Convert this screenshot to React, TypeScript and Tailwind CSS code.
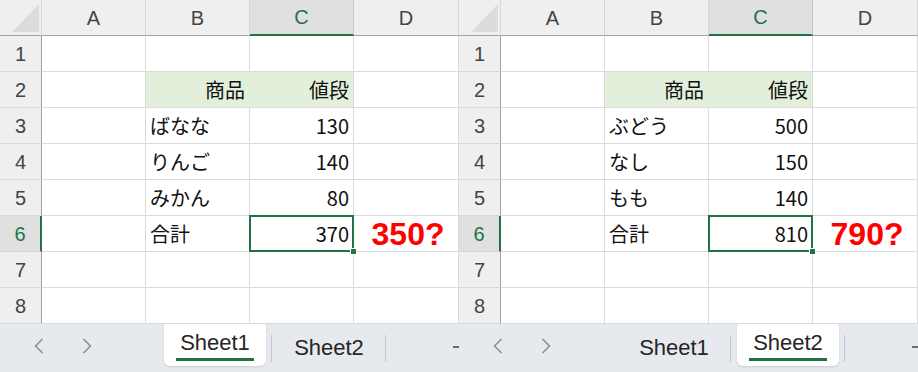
import React from "react";

type SheetProps = {
	items: [string, string][];
	total: string;
	note: string;
	active: number;
};

const font = { fontFamily: '"Noto Sans CJK JP", "Noto Sans", sans-serif' };
const headFont = { fontFamily: '"Liberation Sans", Arial, sans-serif' };

const COLS = ["A", "B", "C", "D"];

function ColHeader({ label }: { label: string }) {
	const sel = label === "C";
	return (
		<div
			style={headFont}
			className={
				sel
					? "flex h-[36px] items-center justify-center border-r border-b-2 border-r-[#c9c9c9] border-b-[#217346] bg-[#e0e0e0] text-[20px] text-[#217346]"
					: "flex h-[36px] items-center justify-center border-r border-b border-r-[#d6d6d6] border-b-[#a3a3a3] bg-[#efefef] text-[20px] text-[#444]"
			}
		>
			{label}
		</div>
	);
}

function RowHeader({ n }: { n: number }) {
	const sel = n === 6;
	return (
		<div
			style={headFont}
			className={
				sel
					? "flex h-[36px] items-center justify-center border-b border-r-2 border-b-[#d4d4d4] border-r-[#217346] bg-[#e0e0e0] text-[20px] text-[#217346]"
					: "flex h-[36px] items-center justify-center border-b border-r border-b-[#d9d9d9] border-r-[#a3a3a3] bg-[#efefef] text-[20px] text-[#444]"
			}
		>
			{n}
		</div>
	);
}

function Cell({
	children,
	right,
	fill,
	noRight,
	selected,
}: {
	children?: React.ReactNode;
	right?: boolean;
	fill?: boolean;
	noRight?: boolean;
	selected?: boolean;
}) {
	return (
		<div
			style={font}
			className={[
				"relative flex h-[36px] items-center border-b border-r border-b-[#dadada] px-[4px] text-[20px] text-[#111]",
				right ? "justify-end" : "justify-start",
				fill ? "bg-[#e2efda]" : "bg-white",
				noRight ? "border-r-[#e2efda]" : "border-r-[#dadada]",
			].join(" ")}
		>
			{selected && (
				<div className="absolute -inset-px z-10 border-2 border-[#217346]">
					<div className="absolute -right-[5px] -bottom-[5px] h-[7px] w-[7px] border border-white bg-[#217346]" />
				</div>
			)}
			<span className="relative z-20">{children}</span>
		</div>
	);
}

function Chevron({ dir }: { dir: "l" | "r" }) {
	return (
		<svg width="10" height="16" viewBox="0 0 10 16" className="mt-[14px]">
			<path
				d={dir === "l" ? "M8.5 1 L1.5 8 L8.5 15" : "M1.5 1 L8.5 8 L1.5 15"}
				fill="none"
				stroke="#8c8c8c"
				strokeWidth="1.5"
			/>
		</svg>
	);
}

function Tab({ label, active }: { label: string; active: boolean }) {
	return (
		<div
			style={headFont}
			className={
				active
					? "flex h-[42px] w-[102px] flex-col items-center rounded-b-[6px] rounded-t-[3px] bg-white pt-[8px] text-[22px] leading-none text-[#262626] shadow-[0_1px_2px_rgba(0,0,0,0.12)]"
					: "flex h-[42px] w-[102px] flex-col items-center pt-[13px] text-[22px] leading-none text-[#262626]"
			}
		>
			<span>{label}</span>
			{active && <div className="mt-[4px] h-[3px] w-[78px] bg-[#217346]" />}
		</div>
	);
}

function Sheet({ items, total, note, active }: SheetProps) {
	const rows: React.ReactNode[] = [];
	for (let r = 1; r <= 8; r++) {
		rows.push(<RowHeader key={`h${r}`} n={r} />);
		if (r === 2) {
			rows.push(<Cell key="a2" />);
			rows.push(
				<Cell key="b2" right fill noRight>
					商品
				</Cell>,
			);
			rows.push(
				<Cell key="c2" right fill>
					値段
				</Cell>,
			);
			rows.push(<Cell key="d2" />);
		} else if (r >= 3 && r <= 5) {
			const [name, price] = items[r - 3];
			rows.push(<Cell key={`a${r}`} />);
			rows.push(<Cell key={`b${r}`}>{name}</Cell>);
			rows.push(
				<Cell key={`c${r}`} right>
					{price}
				</Cell>,
			);
			rows.push(<Cell key={`d${r}`} />);
		} else if (r === 6) {
			rows.push(<Cell key="a6" />);
			rows.push(<Cell key="b6">合計</Cell>);
			rows.push(
				<Cell key="c6" right selected>
					{total}
				</Cell>,
			);
			rows.push(
				<div
					key="d6"
					style={headFont}
					className="flex h-[36px] items-center justify-center border-b border-r border-[#dadada] bg-white pl-[4px] text-[32px] leading-none font-bold text-[#ff0000]"
				>
					{note}
				</div>,
			);
		} else {
			COLS.forEach((c) => rows.push(<Cell key={`${c}${r}`} />));
		}
	}

	return (
		<div className="flex h-[372px] w-[459px] shrink-0 flex-col overflow-hidden">
			<div className="grid grid-cols-[42px_104px_104px_104px_105px]">
				<div className="relative h-[36px] border-r border-b border-r-[#d6d6d6] border-b-[#a3a3a3] bg-[#efefef]">
					<svg width="42" height="36" className="absolute inset-0">
						<polygon points="12,32 39,32 39,4" fill="#dcdcdc" />
					</svg>
				</div>
				{COLS.map((c) => (
					<ColHeader key={c} label={c} />
				))}
				{rows}
			</div>
			<div className="flex h-[48px] w-max items-start bg-[#e6e9ed]">
				<div className="ml-[34px] shrink-0">
					<Chevron dir="l" />
				</div>
				<div className="ml-[38px] shrink-0">
					<Chevron dir="r" />
				</div>
				<div className="ml-[72px] shrink-0">
					<Tab label="Sheet1" active={active === 0} />
				</div>
				<div className="mt-[11px] ml-[5px] h-[27px] w-px shrink-0 bg-[#c4c7cb]" />
				<div className="ml-[6px] shrink-0">
					<Tab label="Sheet2" active={active === 1} />
				</div>
				<div className="mt-[11px] ml-[5px] h-[27px] w-px shrink-0 bg-[#c4c7cb]" />
				<svg width="20" height="20" viewBox="0 0 20 20" className="mt-[13px] ml-[67px] shrink-0">
					<path d="M0 10 H20 M10 0 V20" stroke="#444" strokeWidth="1.6" />
				</svg>
			</div>
		</div>
	);
}

export default function App() {
	return (
		<div className="flex h-[372px] w-[918px] overflow-hidden bg-white">
			<Sheet
				items={[
					["ばなな", "130"],
					["りんご", "140"],
					["みかん", "80"],
				]}
				total="370"
				note="350?"
				active={0}
			/>
			<Sheet
				items={[
					["ぶどう", "500"],
					["なし", "150"],
					["もも", "140"],
				]}
				total="810"
				note="790?"
				active={1}
			/>
		</div>
	);
}
